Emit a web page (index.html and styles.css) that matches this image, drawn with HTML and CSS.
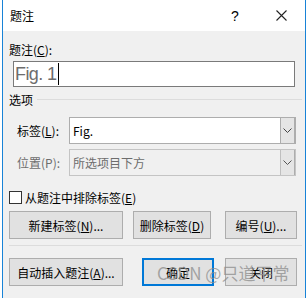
FILE: index.html
```html
<!DOCTYPE html>
<html lang="zh-CN">
<head>
    <meta charset="UTF-8">
    <title>题注</title>
    <link rel="stylesheet" href="styles.css">
</head>
<body>
    <div class="dialog">
        <div class="titlebar">
            <span class="title">题注</span>
            <span class="help">?</span>
            <span class="close">
                <svg width="11" height="11" viewBox="0 0 11 11"><path d="M0.5 0.5 L10.5 10.5 M10.5 0.5 L0.5 10.5" stroke="#222" stroke-width="1.1" fill="none"/></svg>
            </span>
        </div>

        <div class="content">
            <div class="field-label">题注(<u>C</u>):</div>
            <div class="caption-input">
                <span class="caption-text">Fig. 1</span><span class="caret"></span>
            </div>

            <div class="section">
                <span>选项</span>
                <div class="section-line"></div>
            </div>

            <div class="combo-row">
                <label class="combo-label">标签(<u>L</u>):</label>
                <div class="combo">
                    <span class="combo-value">Fig.</span>
                    <span class="combo-btn">
                        <svg width="9" height="5" viewBox="0 0 9 5"><path d="M0.5 0.5 L4.5 4.5 L8.5 0.5" stroke="#444" stroke-width="1" fill="none"/></svg>
                    </span>
                </div>
            </div>

            <div class="combo-row disabled">
                <label class="combo-label">位置(P):</label>
                <div class="combo">
                    <span class="combo-value">所选项目下方</span>
                    <span class="combo-btn">
                        <svg width="9" height="5" viewBox="0 0 9 5"><path d="M0.5 0.5 L4.5 4.5 L8.5 0.5" stroke="#555" stroke-width="1" fill="none"/></svg>
                    </span>
                </div>
            </div>

            <div class="check-row">
                <span class="checkbox"></span>
                <span>从题注中排除标签(<u>E</u>)</span>
            </div>

            <div class="btn-row first">
                <button class="btn w-new">新建标签(<u>N</u>)...</button>
                <button class="btn w-del">删除标签(<u>D</u>)</button>
                <button class="btn w-num">编号(<u>U</u>)...</button>
            </div>

            <div class="separator"></div>

            <div class="btn-row second">
                <button class="btn w-auto">自动插入题注(<u>A</u>)...</button>
                <button class="btn w-ok default">确定</button>
                <button class="btn w-close">关闭</button>
            </div>

            <div class="watermark">CSDN @只道平常</div>
        </div>
    </div>
</body>
</html>
```

FILE: styles.css
```css
body {
    margin: 0;
    background: #FFFFFF;
    font-family: "Noto Sans CJK SC", "Liberation Sans", sans-serif;
    font-size: 12px;
    color: #000;
}

.dialog {
    margin-left: 2px;
    width: 304px;
    height: 298px;
    box-sizing: border-box;
    border-left: 1px solid #1883D7;
    border-right: 1px solid #1883D7;
    display: flex;
    flex-direction: column;
}

.titlebar {
    height: 31px;
    background: #FFFFFF;
    display: flex;
    align-items: center;
    padding-left: 7px;
}

.title {
    flex: 1;
    font-size: 12px;
}

.help {
    width: 10px;
    text-align: center;
    font-family: "Liberation Sans", sans-serif;
    font-size: 14px;
    margin-right: 36px;
}

.close {
    display: flex;
    margin-right: 18px;
}

.content {
    flex: 1;
    background: #F0F0F0;
    padding: 0 0 0 6px;
    position: relative;
}

.field-label {
    margin-top: 10px;
    height: 18px;
    line-height: 18px;
}

.caption-input {
    margin: 2px 0 0 4px;
    width: 282px;
    height: 26px;
    box-sizing: border-box;
    border: 1px solid #7A7A7A;
    background: #FFFFFF;
    display: flex;
    align-items: center;
    padding-left: 1px;
}

.caption-text {
    font-family: "Liberation Sans", sans-serif;
    font-size: 18px;
    letter-spacing: -0.6px;
    color: #6D6D6D;
}

.caret {
    width: 1px;
    height: 22px;
    background: #000;
    margin-left: 2px;
}

.section {
    display: flex;
    align-items: center;
    margin-top: 3px;
    height: 18px;
}

.section-line {
    flex: 1;
    height: 1px;
    background: #DCDCDC;
    margin: 0 3px 0 4px;
}

.combo-row {
    display: flex;
    align-items: center;
    margin-top: 5px;
}

.combo-row + .combo-row {
    margin-top: 5px;
}

.section + .combo-row {
    margin-top: 9px;
}

.combo-label {
    width: 52px;
    padding-left: 8px;
}

.combo {
    width: 227px;
    height: 27px;
    box-sizing: border-box;
    border: 1px solid #ADADAD;
    background: #FFFFFF;
    display: flex;
}

.combo-value {
    flex: 1;
    line-height: 25px;
    padding-left: 3px;
}

.combo-btn {
    width: 13px;
    background: #E5E5E5;
    border-left: 1px solid #ADADAD;
    border-right: 1px solid #ADADAD;
    display: flex;
    align-items: center;
    justify-content: center;
}

.disabled .combo-label,
.disabled .combo-value {
    color: #6D6D6D;
}

.disabled .combo {
    background: #F0F0F0;
    border-color: #C4C4C4;
}

.disabled .combo-btn {
    background: #E5E5E5;
    border-left-color: #BFBFBF;
}

.check-row {
    display: flex;
    align-items: center;
    margin-top: 13px;
    height: 16px;
}

.checkbox {
    width: 13px;
    height: 13px;
    box-sizing: border-box;
    border: 1px solid #333;
    background: #FFFFFF;
    margin-right: 3px;
}

.btn-row {
    display: flex;
}

.btn-row.first {
    margin-top: 6px;
}

.btn-row.second {
    margin-top: 12px;
}

.btn {
    height: 28px;
    box-sizing: border-box;
    border: 1px solid #ADADAD;
    background: #E1E1E1;
    font-family: inherit;
    font-size: 12px;
    color: #000;
    padding: 0;
}

.btn.default {
    border: 2px solid #0078D7;
}

.w-new, .w-auto {
    width: 114px;
}

.w-del {
    width: 78px;
    margin-left: 10px;
}

.w-num {
    width: 72px;
    margin-left: 14px;
}

.w-ok {
    width: 72px;
    margin-left: 19px;
}

.w-close {
    width: 72px;
    margin-left: 11px;
}

.separator {
    height: 1px;
    background: #DCDCDC;
    margin: 6px 3px 0 0;
}

.watermark {
    position: absolute;
    left: 154px;
    top: 229px;
    font-size: 17px;
    color: rgba(140, 140, 140, 0.75);
    white-space: nowrap;
}
```
